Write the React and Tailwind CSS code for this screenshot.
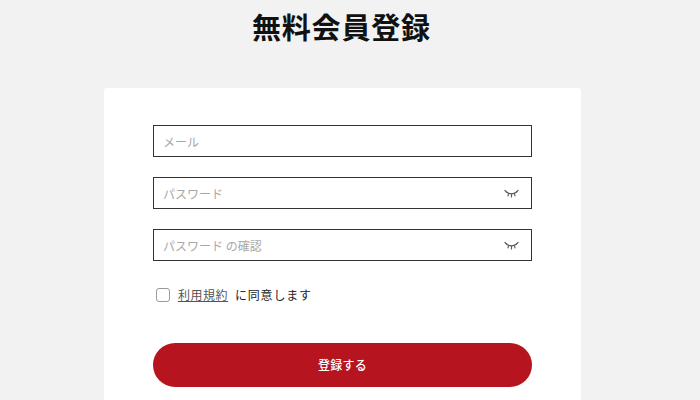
const jp = "font-['Noto_Sans_CJK_JP',sans-serif]";

function ClosedEye() {
  return (
    <svg className="mt-[2px]" width="15" height="10" viewBox="0 0 15 10" fill="none" stroke="#5c5c5c" strokeWidth="1.2" strokeLinecap="round">
      <path d="M2.5 3c3 2.2 7 2.2 10 0" />
      <path d="M1 1.5l1.5 1.5M4.5 4.5l-.5 2.5M7.5 5v3M10.5 4.5l.5 2.5M14 1.5L12.5 3" />
    </svg>
  );
}

function Field({ placeholder, eye }) {
  return (
    <div className="h-8 w-[379px] border border-[#333] bg-white flex items-center justify-between pl-[9px] pr-[12px]">
      <span className="pt-[1px] text-[12px] text-[#a8a8a8]">{placeholder}</span>
      {eye && <ClosedEye />}
    </div>
  );
}

export default function App() {
  return (
    <div className={`h-[400px] w-[700px] overflow-hidden bg-[#f2f2f2] ${jp}`}>
      <h1 className="pt-[6px] pl-[252px] text-[29px] leading-[40px] font-bold tracking-[0.8px] text-[#111]">
        無料会員登録
      </h1>
      <div className="mt-[42px] ml-[104px] w-[477px] h-[330px] bg-white rounded-t-[3px] pt-[37px] pl-[49px]">
        <div className="flex flex-col gap-[20px]">
          <Field placeholder="メール" />
          <Field placeholder="パスワード" eye />
          <Field placeholder="パスワード の確認" eye />
        </div>
        <div className="mt-[25px] flex items-center h-[18px] pl-[3px] text-[12px]">
          <span className="h-[14px] w-[14px] rounded-[3px] border-[1.5px] border-[#999] bg-white" />
          <span className="ml-[8px] underline tracking-[0.5px] text-[#555]">利用規約</span>
          <span className="ml-[7px] tracking-[0.8px] text-[#222]">に同意します</span>
        </div>
        <button className="mt-[39px] h-[44px] w-[379px] rounded-full bg-[#b6151f] text-[12px] font-medium tracking-[0.2px] text-white">
          登録する
        </button>
      </div>
    </div>
  );
}
